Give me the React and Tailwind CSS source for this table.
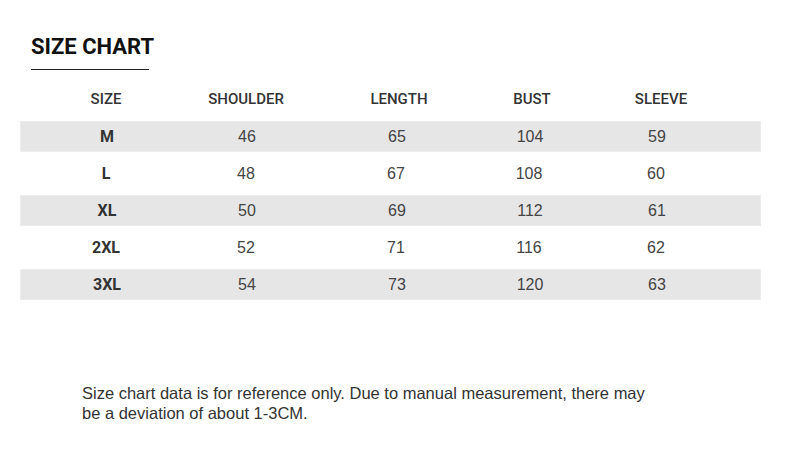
import React from "react";

const rows = [
  ["M", "46", "65", "104", "59"],
  ["L", "48", "67", "108", "60"],
  ["XL", "50", "69", "112", "61"],
  ["2XL", "52", "71", "116", "62"],
  ["3XL", "54", "73", "120", "63"],
];

const grid = "grid grid-cols-[172px_108px_192px_74px_180px_1fr]";

export default function App() {
  return (
    <div className="w-[790px] h-[452px] bg-white font-['Liberation_Sans',Arial,sans-serif] text-[#222] overflow-hidden">
      <div className="pl-[31px] pt-[34px]">
        <h1 className="font-['Roboto',sans-serif] text-[22px] leading-[25px] font-bold text-[#111]">SIZE CHART</h1>
        <div className="mt-[10px] w-[118px] h-px bg-[#222]" />
      </div>
      <div className="mx-[20px] w-[741px] mt-[10px]">
        <div className={`${grid} h-[38px] items-center font-['Roboto',sans-serif] font-medium text-[15px] text-[#333] mb-[3px]`}>
          <div className="text-center">SIZE</div>
          <div className="text-center">SHOULDER</div>
          <div className="text-center pl-[6px]">LENGTH</div>
          <div className="text-center pl-[6px]">BUST</div>
          <div className="text-center pl-[10px]">SLEEVE</div>
          <div />
        </div>
        {rows.map((r, i) => (
          <div
            key={r[0]}
            className={`${grid} items-center ${i % 2 === 0 ? "h-[31px] bg-[#e6e6e6] border border-[#ececec]" : "h-[43px] bg-white"}`}
          >
            <div className="text-center font-['Roboto',sans-serif] text-[16px] font-bold text-[#333]">{r[0]}</div>
            <div className="text-center text-[16px] text-[#444]">{r[1]}</div>
            <div className="text-center text-[16px] text-[#444]">{r[2]}</div>
            <div className="text-center text-[16px] text-[#444]">{r[3]}</div>
            <div className="text-center text-[16px] text-[#444]">{r[4]}</div>
            <div />
          </div>
        ))}
      </div>
      <p className="mt-[83px] ml-[82px] w-[580px] text-[16.5px] leading-[20px] text-[#333]">
        Size chart data is for reference only. Due to manual measurement, there may be a deviation of about 1-3CM.
      </p>
    </div>
  );
}
